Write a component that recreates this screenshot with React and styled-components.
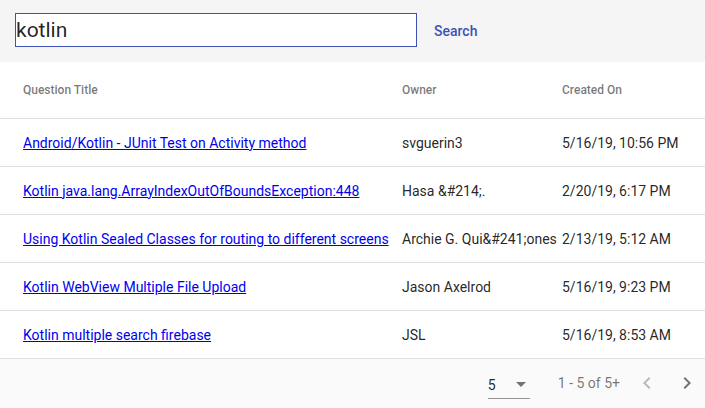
import React from "react";
import styled, { createGlobalStyle } from "styled-components";

const Global = createGlobalStyle`
  html, body { margin: 0; padding: 0; background: #fff; }
  body { font-family: Roboto, "Noto Sans", "Liberation Sans", sans-serif; }
`;

const Page = styled.div`
  width: 705px;
  height: 408px;
  overflow: hidden;
  display: flex;
  flex-direction: column;
`;

const SearchBar = styled.div`
  height: 62px;
  flex: none;
  background: #f5f5f5;
  display: flex;
  align-items: center;
  padding-left: 15px;
  box-sizing: border-box;
`;

const SearchInput = styled.input`
  width: 402px;
  height: 34px;
  box-sizing: border-box;
  border: 1px solid #3f51b5;
  padding: 0;
  margin: -2px 0 0 0;
  font-family: Roboto, sans-serif;
  font-size: 21px;
  color: rgba(0, 0, 0, 0.87);
  background: #fff;
  outline: none;
`;

const SearchButton = styled.button`
  border: none;
  background: transparent;
  color: #3f51b5;
  font-family: Roboto, sans-serif;
  font-weight: 500;
  font-size: 14px;
  padding: 0;
  margin-left: 17px;
  cursor: pointer;
`;

const Grid = styled.div`
  flex: none;
  display: grid;
  grid-template-columns: 379px 160px 1fr;
  padding-left: 23px;
  align-items: center;
  border-bottom: 1px solid #e0e0e0;
  box-sizing: border-box;
  height: ${(p) => p.$h}px;
`;

const HeadCell = styled.div`
  font-size: 12px;
  font-weight: 500;
  color: rgba(0, 0, 0, 0.54);
`;

const Cell = styled.div`
  font-size: 14px;
  color: rgba(0, 0, 0, 0.87);
  white-space: nowrap;
`;

const TitleLink = styled.a`
  font-size: 14px;
  color: #0000ee;
  text-decoration: underline;
  white-space: nowrap;
`;

const Footer = styled.div`
  flex: 1;
  background: #fafafa;
  display: flex;
  align-items: center;
  justify-content: flex-end;
  padding-bottom: 2px;
  box-sizing: border-box;
`;

const Select = styled.div`
  width: 42px;
  height: 26px;
  display: flex;
  align-items: center;
  justify-content: space-between;
  border-bottom: 1px solid #949494;
  box-sizing: border-box;
  margin-top: 6px;
  font-size: 14px;
  color: rgba(0, 0, 0, 0.87);
`;

const Caret = styled.span`
  width: 0;
  height: 0;
  border-left: 5px solid transparent;
  border-right: 5px solid transparent;
  border-top: 5px solid rgba(0, 0, 0, 0.54);
  margin-right: 4px;
  margin-top: -1px;
`;

const Range = styled.div`
  font-size: 14px;
  color: rgba(0, 0, 0, 0.54);
  margin-left: 28px;
`;

const NavButton = styled.button`
  width: 24px;
  height: 24px;
  padding: 0;
  border: none;
  background: transparent;
  display: flex;
  align-items: center;
  justify-content: center;
  margin-left: ${(p) => p.$ml}px;
  color: ${(p) => (p.$disabled ? "rgba(0,0,0,0.26)" : "rgba(0,0,0,0.54)")};
`;

const rows = [
  ["Android/Kotlin - JUnit Test on Activity method", "svguerin3", "5/16/19, 10:56 PM"],
  ["Kotlin java.lang.ArrayIndexOutOfBoundsException:448", "Hasa &#214;.", "2/20/19, 6:17 PM"],
  ["Using Kotlin Sealed Classes for routing to different screens", "Archie G. Qui&#241;ones", "2/13/19, 5:12 AM"],
  ["Kotlin WebView Multiple File Upload", "Jason Axelrod", "5/16/19, 9:23 PM"],
  ["Kotlin multiple search firebase", "JSL", "5/16/19, 8:53 AM"],
];

export default function App() {
  return (
    <Page>
      <Global />
      <SearchBar>
        <SearchInput defaultValue="kotlin" />
        <SearchButton>Search</SearchButton>
      </SearchBar>
      <Grid $h={57}>
        <HeadCell>Question Title</HeadCell>
        <HeadCell>Owner</HeadCell>
        <HeadCell>Created On</HeadCell>
      </Grid>
      {rows.map((r) => (
        <Grid $h={48} key={r[0]}>
          <Cell>
            <TitleLink href="#">{r[0]}</TitleLink>
          </Cell>
          <Cell>{r[1]}</Cell>
          <Cell>{r[2]}</Cell>
        </Grid>
      ))}
      <Footer>
        <Select>
          <span>5</span>
          <Caret />
        </Select>
        <Range>1 - 5 of 5+</Range>
        <NavButton $ml={15} $disabled>
          <svg width="24" height="24" viewBox="0 0 24 24" fill="currentColor">
            <path d="M15.41 7.41L14 6l-6 6 6 6 1.41-1.41L10.83 12z" />
          </svg>
        </NavButton>
        <NavButton $ml={16}>
          <svg width="24" height="24" viewBox="0 0 24 24" fill="currentColor">
            <path d="M10 6L8.59 7.41 13.17 12l-4.58 4.59L10 18l6-6z" />
          </svg>
        </NavButton>
        <div style={{ width: 6 }} />
      </Footer>
    </Page>
  );
}
